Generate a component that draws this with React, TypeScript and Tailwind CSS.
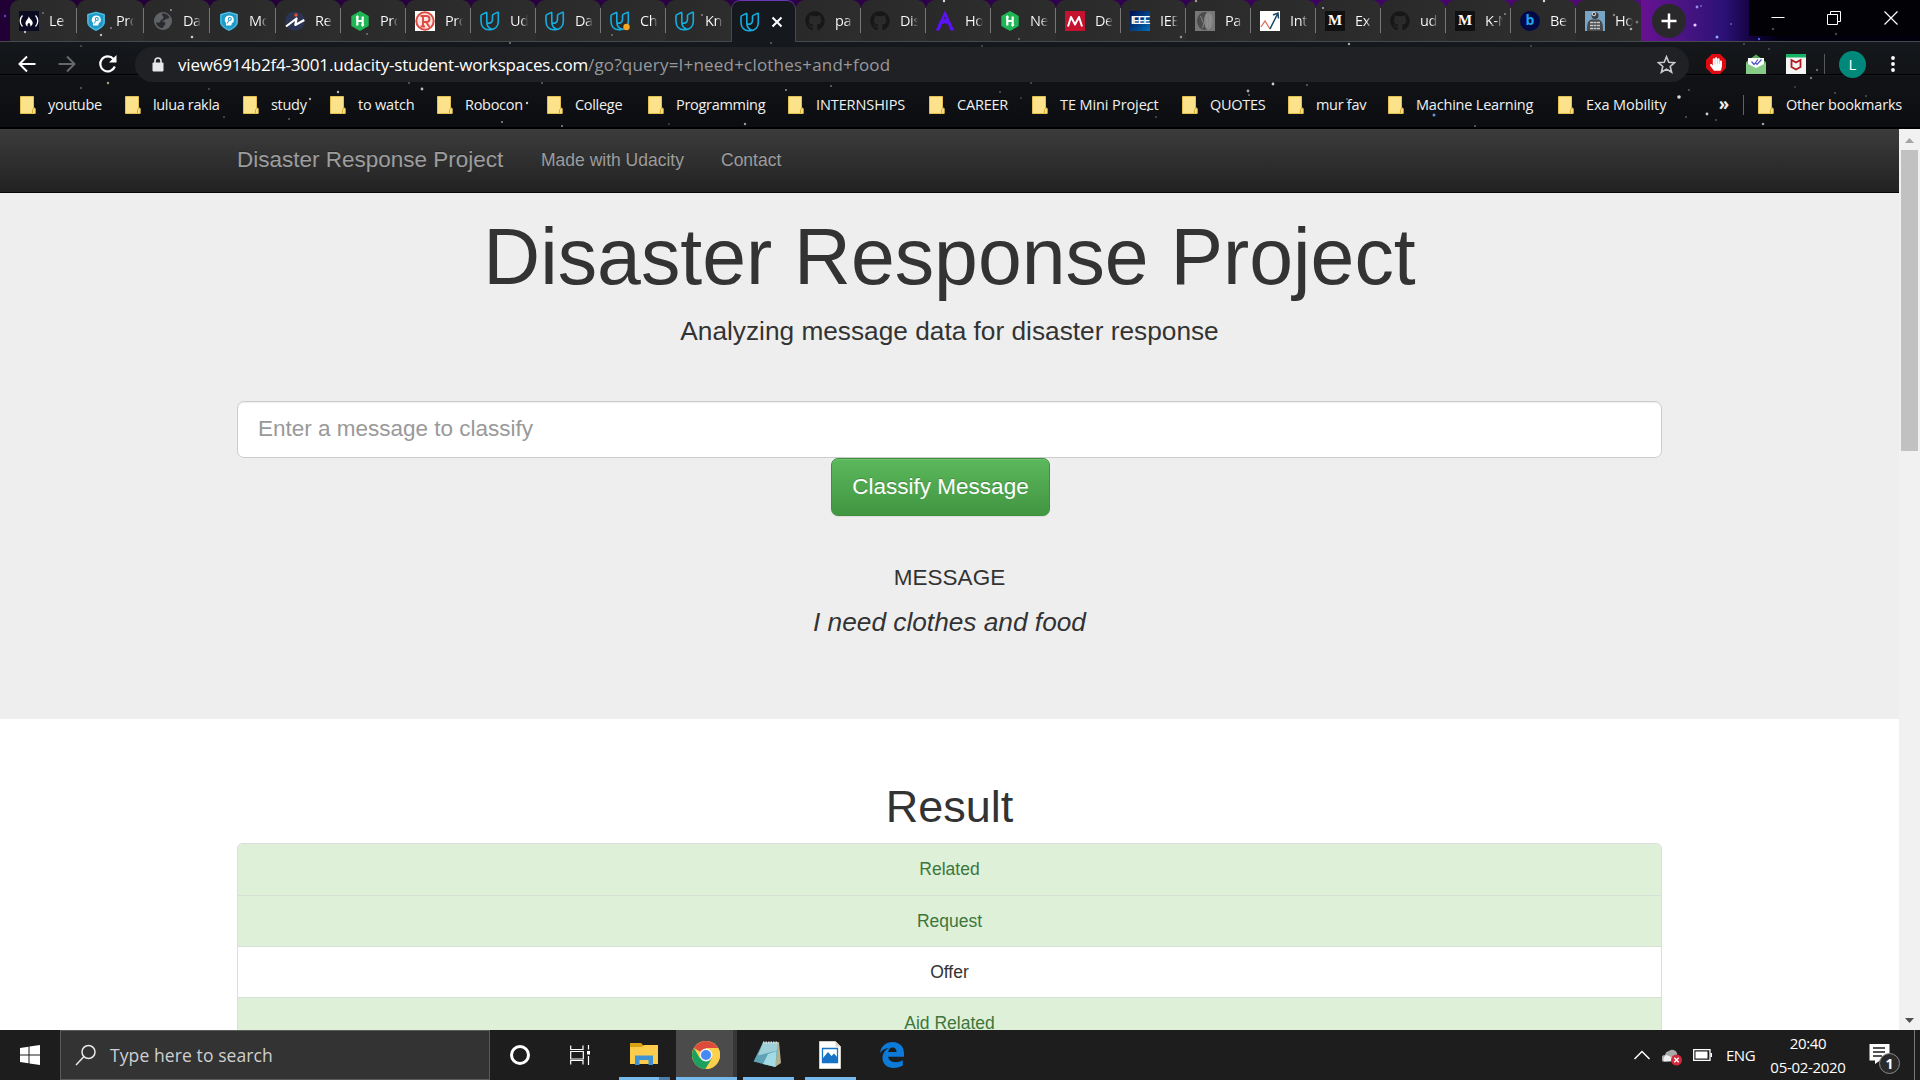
import React from "react";
import { FaGithub, FaHandPaper } from "react-icons/fa";

const UI = "font-['Open_Sans','Noto_Sans',sans-serif]";

function Svg({ children, box = 20, className = "w-5 h-5" }: { children: React.ReactNode; box?: number; className?: string }) {
  return (
    <svg viewBox={`0 0 ${box} ${box}`} className={`shrink-0 ${className}`} fill="none">
      {children}
    </svg>
  );
}

const Camp = () => (
  <div className="w-5 h-5 shrink-0 bg-[#0a0a23]">
    <Svg>
      <path d="M3.500 4.500C.5 7.500.5 12.500 3.500 15.500M16.500 4.500c3 3 3 8 0 11" stroke="#fff" strokeWidth="1.300" />
      <path d="M9.500 4.500c1 3-3 4.500-3 8 0 1.500 1 2.700 2.300 3-1-2 .5-3 1.200-3.700 1 1 1.800 2.300 1.200 3.700 1.300-.5 2.500-1.800 2.500-3.400C13.700 9 10.300 8 9.500 4.500Z" fill="#fff" />
    </Svg>
  </div>
);
const Shield = () => (
  <Svg>
    <path d="M10 .5 19 3v8c0 4-4 7-9 9-5-2-9-5-9-9V3Z" fill="#1d9cc9" />
    <path d="M10 1.500 18 3.700V11c0 3.500-3.500 6-8 8-4.500-2-8-4.500-8-8V3.700Z" stroke="#7cc9e3" strokeWidth=".8" />
    <path d="M7 14.500v-2.500C4.500 9 6 4.500 10.300 4.500s5.200 3.500 4.200 6.500l-1.700 1.200-.6 2.300Z" fill="#fff" />
    <circle cx="10.800" cy="8" r="1.500" stroke="#1d9cc9" strokeWidth="1.100" />
    <path d="m9.800 9.500-1.600 3" stroke="#1d9cc9" />
  </Svg>
);
const Globe = () => (
  <Svg>
    <circle cx="10" cy="10" r="9" fill="#5f6368" />
    <path d="M9 2.500c3-.5 6 1 7.500 4-1.500 2-3 .5-4 2s-3 .5-3.500 2c2 0 3.500.5 3.500 2.500-1 1-1.500 2.500-3 4-3.500 0-6-2.500-6.500-6 2 1 4 1 4.500-1 .5-2 3-1.500 3-3.500 0-1-1.500-1.500-1.500-4Z" fill="#2b2b2d" />
  </Svg>
);
const Zig = () => (
  <Svg>
    <circle cx="10" cy="10" r="9.800" fill="#2b3553" />
    <path d="m1 15.500 10.500-8L10.300 14l9-5" stroke="#fff" strokeWidth="2.200" strokeLinejoin="round" />
    <circle cx="11" cy="4" r="1.700" fill="#ee4f2b" />
  </Svg>
);
const Hacker = () => (
  <Svg>
    <path d="m10 0 8.700 5v10L10 20l-8.700-5V5Z" fill="#1fb755" />
    <path d="M7.300 5v9.500M12.700 5.500V15M7 10h6" stroke="#fff" strokeWidth="2.200" />
    <path d="M5.500 6.500 7.300 4l1.800 2.500M10.900 13.500l1.800 2.500 1.800-2.500" fill="#fff" />
  </Svg>
);
const RIcon = () => (
  <div className="w-5 h-5 shrink-0 bg-white">
    <Svg>
      <circle cx="10" cy="10" r="8.700" fill="#fbe4e1" stroke="#dc4b41" strokeWidth="2" />
      <path d="M5.500 5h6a3 3 0 0 1 0 6H8M8 5v10.500M5.500 15.500H10M11 11l3.500 5" stroke="#dc4b41" strokeWidth="1.900" />
    </Svg>
  </div>
);
const Udacity = ({ dot = false }: { dot?: boolean }) => (
  <Svg>
    <path d="M6.300 1.500 1.800 3.600Q1 4 1 5v5.500c0 4.800 3.200 8.300 7.800 8.300 1.300 0 2.300-.2 3.200-.6-3.500-1-5.200-3.500-5.200-7.500V2Q6.800 1.200 6.300 1.500ZM6.900 11.800c2.800 1.200 5.600-.3 5.600-3.300V4.600q0-.8.800-1.200l4-2q1-.5 1 .6v8.800c0 4.500-3.300 8-8.800 8" stroke="#14aee2" strokeWidth="1.600" strokeLinejoin="round" />
    {dot && <circle cx="16.500" cy="16" r="3.200" fill="#f5a623" />}
  </Svg>
);
const Git = () => <FaGithub className="w-5 h-5 shrink-0 text-[#161719]" />;
const Hoop = () => (
  <Svg>
    <path d="M10 2.500 6.500 10c2.200-1 4.800-1 7 0Z" stroke="#5b12f5" strokeWidth="2.600" />
    <path d="m4.500 12 2.500 1.500-2.500 6H.5ZM15.500 12 13 13.500l2.500 6h4Z" fill="#5b12f5" />
    <path d="M3.800 14c3-4 9.400-4 12.400 0" stroke="#5b12f5" strokeWidth="2.400" />
  </Svg>
);
const Mendeley = () => (
  <div className="w-5 h-5 shrink-0 bg-[#c4122f]">
    <Svg>
      <path d="M3 15.500 6 6l4 7.500L14 6l3 9.500" stroke="#fff" strokeWidth="2" strokeLinejoin="round" />
    </Svg>
  </div>
);
const Ieee = () => (
  <div className="flex h-5 w-5 shrink-0 items-center justify-center bg-linear-to-br from-[#020a52] to-[#0870b8] font-['Liberation_Sans',sans-serif] text-[10px] font-bold tracking-[-1.200px] text-white">
    IEEE
  </div>
);
const Paper = () => (
  <div className="w-5 h-5 shrink-0 bg-[#777]">
    <Svg>
      <ellipse cx="9.500" cy="10" rx="7.500" ry="9" fill="#4c4c4c" />
      <ellipse cx="13.500" cy="10" rx="4.500" ry="9" fill="#858585" />
      <path d="M5 5c3 2 1 4 3 6s-1 4 0 6M12 3c-1 4 1 8 0 14M15 4c1 4-1 8 0 12" stroke="#999" strokeWidth=".8" />
    </Svg>
  </div>
);
const Chart = () => (
  <div className="w-5 h-5 shrink-0 bg-white">
    <Svg>
      <path d="m1 16 4-6 5 8" stroke="#dd7259" strokeWidth="1.300" />
      <path d="m10 18 7.500-15M13 4l5-2 .5 5.500" stroke="#1b4668" strokeWidth="1.500" />
    </Svg>
  </div>
);
const Medium = () => (
  <div className="flex h-5 w-5 shrink-0 items-center justify-center bg-[#101010] font-['Liberation_Serif',serif] text-[15px] font-bold text-white">
    M
  </div>
);
const BIcon = () => (
  <div className="flex h-5 w-5 shrink-0 items-center justify-center rounded-full bg-[#010a45] pb-0.5 font-['Open_Sans',sans-serif] text-[14px] font-bold text-[#1fa4f0]">
    b
  </div>
);
const Person = () => (
  <div className="w-5 h-5 shrink-0 bg-[#78a5c5]">
    <Svg>
      <path d="M2 20c0-8 1-11 5-11.500h6c4 .5 5 4 5 11.500Z" fill="#45484d" />
      <circle cx="10" cy="4.500" r="3.500" fill="#3b3d40" />
      <circle cx="9" cy="3" r="1.800" stroke="#ddd" />
      <path d="M5 11.500h10M5 14.500h10M5 17.500h10" stroke="#c9c9c9" strokeWidth="1.600" strokeDasharray="3 .5" />
    </Svg>
  </div>
);

type TabSpec = { icon: React.ReactNode; label: string; width: string; sep?: boolean; active?: boolean };
const W67 = "w-[67px]";
const W66 = "w-[66px]";
const W65 = "w-[65px]";
const tabs: TabSpec[] = [
  { icon: <Camp />, label: "Le", width: W67, sep: true },
  { icon: <Shield />, label: "Pro", width: W67, sep: true },
  { icon: <Globe />, label: "Da", width: W66, sep: true },
  { icon: <Shield />, label: "Mo", width: W66, sep: true },
  { icon: <Zig />, label: "Re", width: W65, sep: true },
  { icon: <Hacker />, label: "Pro", width: W65, sep: true },
  { icon: <RIcon />, label: "Pro", width: W65, sep: true },
  { icon: <Udacity />, label: "Uda", width: W65, sep: true },
  { icon: <Udacity />, label: "Da", width: W65, sep: true },
  { icon: <Udacity dot />, label: "Cha", width: W65, sep: true },
  { icon: <Udacity />, label: "Kn", width: W65 },
  { icon: <Udacity />, label: "", width: W65, active: true },
  { icon: <Git />, label: "pa", width: W65, sep: true },
  { icon: <Git />, label: "Dis", width: W65, sep: true },
  { icon: <Hoop />, label: "Ho", width: W65, sep: true },
  { icon: <Hacker />, label: "Ne", width: W65, sep: true },
  { icon: <Mendeley />, label: "De", width: W65, sep: true },
  { icon: <Ieee />, label: "IEE", width: W65, sep: true },
  { icon: <Paper />, label: "Pa", width: W65, sep: true },
  { icon: <Chart />, label: "Int", width: W65, sep: true },
  { icon: <Medium />, label: "Ex", width: W65, sep: true },
  { icon: <Git />, label: "uda", width: W65, sep: true },
  { icon: <Medium />, label: "K-N", width: W65, sep: true },
  { icon: <BIcon />, label: "Be", width: W65, sep: true },
  { icon: <Person />, label: "Ho", width: W65 },
];

function Tab({ icon, label, width, sep, active }: TabSpec) {
  if (active)
    return (
      <div className={`${width} flex h-[42px] shrink-0 items-center rounded-t-[9px] border-x border-t border-[#47494d] border-t-[#6b35b5] bg-[#15181d] pl-[8px] shadow-[0_1px_0_#15181d]`}>
        {icon}
        <svg viewBox="0 0 12 12" className="ml-[11px] h-3 w-3">
          <path d="m1.500 1.500 9 9m0-9-9 9" stroke="#fff" strokeWidth="2" />
        </svg>
      </div>
    );
  return (
    <div className={`${width} flex h-[41px] shrink-0 items-center rounded-t-[9px] bg-linear-to-r from-[#292929] to-[#2d2d2d] pl-[9px]`}>
      {icon}
      <span className="ml-[10px] w-[18px] overflow-hidden whitespace-nowrap bg-linear-to-r from-white from-60% to-transparent bg-clip-text text-[14.5px] leading-5 tracking-[-0.4px] text-transparent">
        {label}
      </span>
      {sep && <span className="ml-auto h-[25px] w-px bg-[#77777a]" />}
    </div>
  );
}

const Folder = () => (
  <svg viewBox="0 0 16 18" className="h-[18px] w-4 shrink-0">
    <path d="M.5.500h13v11l1.700 1v5H.5Z" fill="#fde28c" stroke="#e3bf4e" />
    <path d="M12.500 17v-3.500l1.500-1.500" stroke="#d9a92e" fill="none" />
  </svg>
);

const bookmarks: [string, string, string][] = [
  ["youtube", "w-[105px]", "tracking-[-0.3px]"],
  ["lulua rakla", "w-[118px]", "tracking-[-0.35px]"],
  ["study", "w-[87px]", "tracking-[-0.3px]"],
  ["to watch", "w-[107px]", "tracking-[-0.2px]"],
  ["Robocon", "w-[110px]", "tracking-[-0.3px]"],
  ["College", "w-[101px]", "tracking-[-0.3px]"],
  ["Programming", "w-[140px]", "tracking-[-0.3px]"],
  ["INTERNSHIPS", "w-[141px]", "tracking-[-0.1px]"],
  ["CAREER", "w-[103px]", "tracking-[-0.2px]"],
  ["TE Mini Project", "w-[150px]", "tracking-[-0.1px]"],
  ["QUOTES", "w-[106px]", "tracking-[-0.3px]"],
  ["mur fav", "w-[100px]", "tracking-[-0.3px]"],
  ["Machine Learning", "w-[170px]", "tracking-[-0.2px]"],
  ["Exa Mobility", "w-[155px]", "tracking-[-0.1px]"],
];

const stars: [number, number, number, string][] = [
  [5, 16, 1.2, "#5b46b8"], [43, 13, 1, "#777"], [25, 32, 1.2, "#bbb"], [101, 35, 1.2, "#bbb"], [111, 28, 1, "#888"], [171, 10, 1, "#999"],
  [192, 37, 1.3, "#ccc"], [81, 46, 1, "#555"], [108, 83, 1.2, "#a9a27a"], [81, 88, 1, "#666"], [209, 89, 1, "#555"], [289, 119, 1, "#666"],
  [310, 99, 1.2, "#aaa"], [338, 92, 1.2, "#bbb"], [422, 89, 1.4, "#bbb"], [409, 83, 1, "#666"], [224, 117, 1, "#555"], [367, 34, 1, "#777"],
  [502, 122, 1.1, "#888"], [527, 103, 1.2, "#ccc"], [562, 126, 1, "#888"], [542, 83, 1, "#666"], [510, 43, 1.1, "#777"], [612, 35, 1, "#777"],
  [745, 124, 1.2, "#999"], [786, 90, 1.1, "#888"], [831, 86, 1.1, "#666"], [771, 43, 1, "#666"], [944, 1, 1.2, "#ddd"], [982, 46, 1, "#555"],
  [1019, 39, 1, "#777"], [1031, 83, 1, "#555"], [1000, 92, 1, "#555"], [1021, 98, 1, "#444"], [1148, 110, 1.3, "#ccc"], [1156, 117, 1, "#555"],
  [1181, 37, 1.2, "#999"], [1196, 1, 1.2, "#a99"], [1248, 91, 1.4, "#aaa"], [1249, 95, 1, "#777"], [1273, 84, 1.4, "#ccc"], [1307, 85, 1, "#666"],
  [1349, 44, 1.2, "#aaa"], [1323, 8, 1.1, "#aaa"], [1434, 115, 1.5, "#6d8fe0"], [1347, 99, 1, "#777"], [1475, 126, 1, "#666"], [1544, 1, 1.2, "#ddd"],
  [1531, 46, 1, "#555"], [1679, 97, 1.8, "#ddd"], [1707, 114, 1.4, "#ccc"], [1689, 90, 1.1, "#555"], [1686, 117, 1.1, "#555"], [1716, 120, 1.1, "#555"],
  [1763, 124, 1.3, "#99a"], [1695, 25, 1.6, "#e9c9ff"], [1717, 37, 1.5, "#8fa5ff"], [1697, 7, 1.4, "#9d8bf0"], [1701, 6, 1, "#8060d0"], [1731, 24, 1, "#6a55b8"],
  [1759, 39, 1.2, "#4960d8"], [1773, 29, 1.3, "#444"], [1836, 34, 1.2, "#444"], [1744, 44, 1, "#555"], [1769, 49, 1, "#555"], [1817, 70, 1.2, "#666"],
  [1811, 78, 1.2, "#777"], [1835, 93, 1, "#555"], [1866, 96, 1, "#555"], [1637, 22, 1.5, "#777"], [1631, 29, 1.3, "#aaa"], [1614, 15, 1.2, "#888"],
  [669, 124, 1, "#444"], [702, 15, 1, "#888"], [1505, 14, 1.1, "#888"], [1492, 25, 1, "#777"], [1795, 87, 1, "#444"],
];

function Browser() {
  return (
    <header className={`relative h-[129px] shrink-0 overflow-hidden bg-[#101215] text-white ${UI}`}>
      <div className="flex h-[41px] bg-linear-to-r from-[#210035] via-[#300050] via-60% to-[#6b1495]">
        <div className="w-[10px] shrink-0" />
        <div className="flex">
          {tabs.map((t, i) => (
            <Tab key={i} {...t} />
          ))}
        </div>
        <div className="flex flex-1 bg-linear-to-r from-[#681092] from-0% via-[#2b1175] via-30% to-[#02000f] to-50%">
          <div className="mt-1 ml-[11px] flex h-[34px] w-[34px] items-center justify-center rounded-full bg-[#29292b]">
            <svg viewBox="0 0 16 16" className="h-4 w-4">
              <path d="M8 .5v15M.5 8h15" stroke="#fff" strokeWidth="2.500" />
            </svg>
          </div>
          <div className="ml-auto flex h-9 w-[171px] items-center bg-[#020206]">
            <svg viewBox="0 0 14 14" className="ml-[22px] h-[14px] w-[14px]">
              <path d="M.5 6.500h13" stroke="#fff" />
            </svg>
            <svg viewBox="0 0 14 14" className="ml-[42px] h-[14px] w-[14px]" fill="none">
              <path d="M.5 3.500h10v10H.5ZM3.500 3.500v-3h10v10h-3" stroke="#fff" />
            </svg>
            <svg viewBox="0 0 14 14" className="ml-[43px] h-[14px] w-[14px]">
              <path d="m.5.500 13 13m0-13-13 13" stroke="#fff" strokeWidth="1.200" />
            </svg>
          </div>
        </div>
      </div>
      <div className="h-px bg-[#47484b]" />
      <div className="flex h-[46px] items-center bg-[linear-gradient(#15181c_0,#121417_32px,#000_32px,#000_33px,#1b1c1f_33px,#101215_34px)] pb-[2px]">
        <svg viewBox="0 0 20 20" className="ml-[17px] h-5 w-5" fill="none">
          <path d="M18.500 10H3M10 2.500 2.500 10l7.500 7.500" stroke="#fff" strokeWidth="2" />
        </svg>
        <svg viewBox="0 0 20 20" className="ml-5 h-5 w-5" fill="none">
          <path d="M1.500 10H17M10 2.500l7.500 7.500-7.500 7.500" stroke="#66686b" strokeWidth="2" />
        </svg>
        <svg viewBox="0 0 20 20" className="ml-[21px] h-5 w-5" fill="none">
          <path d="M16.800 12.500A7.500 7.500 0 1 1 15.500 5L17.500 7" stroke="#fff" strokeWidth="2.200" />
          <path d="M18.500 1v7.500H11Z" fill="#fff" />
        </svg>
        <div className="flex h-[35px] w-[1554px] ml-[17px] items-center rounded-full bg-[#202124] pr-[13px] pl-[17px]">
          <svg viewBox="0 0 12 15" className="h-[15px] w-3" fill="none">
            <path d="M3 6V4a3 3 0 0 1 6 0v2" stroke="#e6e8ea" strokeWidth="1.600" />
            <rect x=".5" y="5.500" width="11" height="9" rx="1" fill="#e6e8ea" />
          </svg>
          <span className="ml-[14px] whitespace-pre text-[17px] leading-none tracking-[0.2px] text-[#97999d]">
            <span className="tracking-[-0.2px] text-white">view6914b2f4-3001.udacity-student-workspaces.com</span>/go?query=I+need+clothes+and+food
          </span>
          <svg viewBox="0 0 20 20" className="ml-auto h-[19px] w-[19px]" fill="none">
            <path d="m10 1.800 2.400 5.800 6.200.5-4.700 4 1.500 6.100-5.400-3.300-5.400 3.300 1.500-6.100-4.700-4 6.200-.5Z" stroke="#c9cbce" strokeWidth="1.700" />
          </svg>
        </div>
        <div className="ml-[17px] flex h-5 w-5 items-center justify-center bg-[#e00b10] [clip-path:polygon(30%_0,70%_0,100%_30%,100%_70%,70%_100%,30%_100%,0_70%,0_30%)]">
          <FaHandPaper className="h-[14px] w-3 text-white" />
        </div>
        <svg viewBox="0 0 20 20" className="ml-5 h-5 w-5" fill="none">
          <path d="m0 8 10-7.500L20 8v11H0Z" fill="#58ad5d" />
          <path d="M2 4h16v7l-8 5-8-5Z" fill="#fff" />
          <path d="m0 9 10 5 10-5v11H0Z" fill="#86cc87" />
          <path d="m5.500 7.500 2.500 3 4-5M9.500 9l1.500 1.500 4.500-5" stroke="#4b4fc4" strokeWidth="1.200" />
        </svg>
        <svg viewBox="0 0 20 20" className="ml-5 h-5 w-5" fill="none">
          <path d="M0 0h20v20H0Z" fill="#f5f5f5" />
          <path d="M0 0h20v3.500H0Z" fill="#14b365" />
          <path d="m5.500 6 4.500 2.500L14.500 6v7L10 15.500 5.500 13Z" stroke="#b01a22" strokeWidth="1.800" />
        </svg>
        <span className="ml-[18px] h-5 w-px bg-[#55575a]" />
        <span className="ml-[14px] flex h-[27px] w-[27px] items-center justify-center rounded-full bg-[#00897b] text-[15px]">L</span>
        <svg viewBox="0 0 6 18" className="ml-6 h-[18px] w-1.5">
          <circle cx="3" cy="3" r="1.900" fill="#fff" />
          <circle cx="3" cy="9" r="1.900" fill="#fff" />
          <circle cx="3" cy="15" r="1.900" fill="#fff" />
        </svg>
      </div>
      <div className="flex h-[39px] items-center bg-linear-to-b from-[#101215] to-[#0b0d10] pb-[5px] pl-5 text-[14.5px] text-[#f0f0f0]">
        {bookmarks.map(([name, width, tracking]) => (
          <div key={name} className={`${width} flex shrink-0 items-center gap-3`}>
            <Folder />
            <span className={`whitespace-nowrap ${tracking}`}>{name}</span>
          </div>
        ))}
        <span className="w-[22px] pb-1 text-center text-[17px] leading-none font-bold">»</span>
        <span className="mr-[14px] ml-auto h-5 w-px bg-[#606164]" />
        <div className="flex w-[162px] items-center gap-3">
          <Folder />
          <span className="whitespace-nowrap tracking-[-0.2px]">Other bookmarks</span>
        </div>
      </div>
      <div className="h-[2px] bg-black" />
      <svg viewBox="0 0 1920 129" className="pointer-events-none absolute top-0 left-0 h-[129px] w-[1920px]">
        {stars.map(([x, y, r, c], i) => (
          <circle key={i} cx={x} cy={y} r={r} fill={c} />
        ))}
      </svg>
    </header>
  );
}

const rows: [string, boolean][] = [
  ["Related", true],
  ["Request", true],
  ["Offer", false],
  ["Aid Related", true],
];

function Page() {
  return (
    <main className="min-w-0 flex-1 bg-white font-['Liberation_Sans',Arial,sans-serif] text-[#333]">
      <nav className="h-16 border-b border-[#090909] bg-linear-to-b from-[#3c3c3c] to-[#222]">
        <div className="mx-auto flex h-[62px] w-[1425px] items-center text-[17.5px] text-[#9d9d9d] [text-shadow:0_-1px_0_rgba(0,0,0,.25)]">
          <span className="w-[304px] text-[22.5px]">Disaster Response Project</span>
          <span className="w-[180px]">Made with Udacity</span>
          <span>Contact</span>
        </div>
      </nav>
      <section className="h-[526px] bg-[#eee] pt-[21px] text-center">
        <h1 className="text-[78.75px] leading-[87px]">Disaster Response Project</h1>
        <p className="mt-[12px] text-[26.25px] leading-[37px]">Analyzing message data for disaster response</p>
        <div className="mx-auto mt-[51px] w-[1425px]">
          <div className="flex h-[57px] items-center rounded-[7px] border border-[#ccc] bg-white pb-px pl-5 text-[22.5px] text-[#999] shadow-[inset_0_1px_1px_rgba(0,0,0,.075)]">
            Enter a message to classify
          </div>
          <button className="mx-auto block h-[58px] w-[219px] -translate-x-[9px] rounded-[7px] border border-[#3e8f3e] bg-linear-to-b from-[#5cb85c] to-[#419641] text-[22.5px] text-white shadow-[inset_0_1px_0_rgba(255,255,255,.15),0_1px_1px_rgba(0,0,0,.075)] [text-shadow:0_-1px_0_rgba(0,0,0,.2)]">
            Classify Message
          </button>
        </div>
        <h4 className="mt-[49px] text-[22.5px] leading-[25px]">MESSAGE</h4>
        <p className="mt-[14px] text-[26.25px] leading-[37px] italic">I need clothes and food</p>
      </section>
      <section className="pt-[63px] text-center">
        <h2 className="text-[45px] leading-[50px]">Result</h2>
        <ul className="mx-auto mt-[11px] w-[1425px] overflow-hidden rounded-t-[5px] border border-[#ddd]">
          {rows.map(([name, on]) => (
            <li key={name} className={`flex h-[51.2px] items-center justify-center border-b border-[#d6e0d4] text-[17.5px] first:h-[52px] ${on ? "bg-[#dff0d8] text-[#3c763d]" : "bg-white"}`}>
              {name}
            </li>
          ))}
        </ul>
      </section>
    </main>
  );
}

function Scrollbar() {
  return (
    <div className="flex w-[21px] shrink-0 flex-col items-center bg-[#f1f1f1]">
      <svg viewBox="0 0 21 21" className="h-[21px] w-[21px]">
        <path d="m6 14 4.500-5 4.500 5Z" fill="#a3a3a3" />
      </svg>
      <div className="h-[301px] w-[17px] bg-[#c1c1c1]" />
      <svg viewBox="0 0 21 21" className="mt-auto h-[21px] w-[21px]">
        <path d="m6 9 4.500 5L15 9Z" fill="#505050" />
      </svg>
    </div>
  );
}

function Taskbar() {
  return (
    <footer className={`flex h-[50px] shrink-0 bg-[#1d1d1d] text-white ${UI}`}>
      <div className="flex w-[60px] items-center justify-center">
        <Svg>
          <path d="M0 3 8.500 1.700v7.800H0ZM9.500 1.500 20 0v9.500H9.500ZM0 10.500h8.500v7.800L0 17ZM9.500 10.500H20V20L9.500 18.500Z" fill="#fff" />
        </Svg>
      </div>
      <div className="flex w-[430px] items-center border border-[#5a5a5a] bg-[#333] pl-[14px] text-[17.5px] text-[#cfcfcf]">
        <svg viewBox="0 0 22 22" className="h-[22px] w-[22px]" fill="none">
          <circle cx="13.500" cy="8" r="6.500" stroke="#e8e8e8" strokeWidth="1.500" />
          <path d="m9 12.500-8 8.500" stroke="#e8e8e8" strokeWidth="1.500" />
        </svg>
        <span className="ml-[13px] tracking-[0.1px]">Type here to search</span>
      </div>
      <div className="flex w-[60px] items-center justify-center">
        <span className="h-5 w-5 rounded-full border-[3px] border-white" />
      </div>
      <div className="flex w-[60px] items-center justify-center">
        <Svg>
          <path d="M.7.500v4H13v-4M.7 6.500h12.600v7.500H.7ZM.7 19.500v-4H13v4M18.500 0v4.500M18.500 11v9" stroke="#fff" strokeWidth="1.200" />
          <path d="M17 6h3v3.500h-3Z" fill="#fff" />
        </Svg>
      </div>
      <div className="ml-[9px] flex w-[51px] flex-col items-center">
        <svg viewBox="0 0 28 24" className="mt-3 mr-px h-6 w-7">
          <path d="M0 1h11l3 3h14v4H0Z" fill="#d9a215" />
          <path d="M0 5h12l2-2h14v19H0Z" fill="#fccd4d" />
          <path d="M5 23V13.500h18V23h-4.500v-5h-9v5Z" fill="#3f93d3" />
        </svg>
        <div className="mt-auto h-[3px] w-full bg-linear-to-r from-[#76b9ed] from-78% to-[#4f7fa8] to-78%" />
      </div>
      <div className="ml-[6px] flex w-[61px] flex-col bg-linear-to-r from-[#4b4b4b] from-93% to-[#373737] to-93%">
        <svg viewBox="0 0 28 28" className="mt-[11px] ml-[16px] h-7 w-7">
          <circle cx="14" cy="14" r="14" fill="#fcd04a" />
          <path d="M14 14 1.900 7A14 14 0 0 1 26.100 7H14Z" fill="#dd4b3e" />
          <path d="M1.900 7a14 14 0 0 0 11.500 21L20 17.500 14 14 8 17.500Z" fill="#1ba05f" />
          <path d="M26.100 7H14l6 10.500L13.500 28A14 14 0 0 0 26.100 7Z" fill="#fcd04a" />
          <circle cx="14" cy="14" r="6.500" fill="#f1f1f1" />
          <circle cx="14" cy="14" r="5" fill="#4688f4" />
        </svg>
        <div className="mt-auto h-[3px] bg-[#76b9ed]" />
      </div>
      <div className="ml-[6px] flex w-[51px] flex-col items-center">
        <svg viewBox="0 0 28 28" className="mt-[10px] mr-1 h-7 w-7">
          <path d="m10 3 16-1 2 21-6 4Z" fill="#b5b08d" />
          <path d="M10 2.500h15L22.500 27 .5 21.500Z" fill="#5fa3b4" />
          <path d="M10 2.500h15l-1 8-19 5Z" fill="#9fd0d9" />
          <path d="m15 14 8.500-3L22.500 27 10 24Z" fill="#a3dbe4" />
          <path d="M10 2.500h15" stroke="#ddd" strokeWidth="2" strokeDasharray="1.500 1" />
        </svg>
        <div className="mt-auto h-[3px] w-full bg-[#76b9ed]" />
      </div>
      <div className="ml-[11px] flex w-[51px] flex-col items-center">
        <svg viewBox="0 0 22 28" className="mt-[11px] mr-0.5 h-7 w-[22px]">
          <path d="M.5.500h16l5 5v22H.5Z" fill="#fff" stroke="#d5d0c5" />
          <path d="M16.500.500v5h5Z" fill="#ddd0bd" />
          <path d="M3.500 7.500h15v14h-15Z" fill="#fff" stroke="#1673c5" strokeWidth="1.300" />
          <path d="M4 21v-4l5-6 3.500 4L15 12.500l3.500 4V21Z" fill="#1673c5" />
        </svg>
        <div className="mt-auto h-[3px] w-full bg-[#76b9ed]" />
      </div>
      <div className="ml-[24px] flex items-center">
        <svg viewBox="0 0 24 26" className="h-[26px] w-6">
          <path d="M0 11C1 4 6 0 12.500 0 20 0 24 5 24 11.500v3.300H8.200c.3 3.700 3.500 5.400 7.300 5.400 2.800 0 5.300-.8 7.300-2v5.400c-2.400 1.500-5.400 2.400-9 2.400C7 26 2.500 22 2.500 16c0-4.500 2.500-8 6.500-10-4 .3-7 2-9 5Zm8.300-1h8.200c0-2.800-1.300-4.400-3.900-4.400-2.400 0-4 1.800-4.300 4.400Z" fill="#0b7ad8" />
        </svg>
      </div>
      <div className="ml-auto flex items-center text-[15px]">
        <svg viewBox="0 0 16 10" className="h-[10px] w-4" fill="none">
          <path d="m.5 9 7.500-7.500L15.500 9" stroke="#fff" strokeWidth="1.500" />
        </svg>
        <svg viewBox="0 0 20 18" className="mt-[3px] ml-3 h-[18px] w-5">
          <path d="M3 14a3.500 3.500 0 0 1 0-7 5 5 0 0 1 4-4 5 5 0 0 1 8 2l1 8Z" fill="#a9a9a9" />
          <path d="M2 13a4 4 0 0 1 3-6l6 3-2 3Z" fill="#eee" />
          <circle cx="14.500" cy="12" r="5.500" fill="#d4283c" />
          <path d="m12.300 9.800 4.400 4.400m0-4.400-4.400 4.400" stroke="#fff" strokeWidth="1.400" />
        </svg>
        <svg viewBox="0 0 20 12" className="ml-[11px] h-3 w-5" fill="none">
          <path d="M.7.700H17v10.600H.7Z" stroke="#fff" strokeWidth="1.300" />
          <path d="M2.500 2.500h12v7h-12ZM17.500 4h1.500v4h-1.500Z" fill="#fff" />
        </svg>
        <span className="ml-[13px] w-[29px] tracking-[-0.5px]">ENG</span>
        <div className="ml-[13px] w-[80px] text-center leading-6 tracking-[-0.3px] whitespace-nowrap">
          <div>20:40</div>
          <div>05-02-2020</div>
        </div>
        <svg viewBox="0 0 32 32" className="mt-2 ml-[21px] h-8 w-8" fill="none">
          <path d="M.5 1h20v16.500h-9.500L6 21v-3.500H.5Z" fill="#fff" />
          <path d="M4 5h12M4 9h12M4 13h9" stroke="#1d1d1d" strokeWidth="1.300" />
          <circle cx="20.500" cy="20.500" r="10" fill="#2a2a2a" stroke="#8a8a8a" />
          <text x="20.500" y="25.500" textAnchor="middle" fontSize="14" fill="#fff" className="font-bold">1</text>
        </svg>
        <span className="mr-[5px] ml-[13px] h-[50px] w-px bg-[#777]" />
      </div>
    </footer>
  );
}

export default function App() {
  return (
    <div className="flex h-[1080px] w-[1920px] flex-col overflow-hidden">
      <Browser />
      <div className="flex min-h-0 flex-1 overflow-hidden">
        <Page />
        <Scrollbar />
      </div>
      <Taskbar />
    </div>
  );
}
